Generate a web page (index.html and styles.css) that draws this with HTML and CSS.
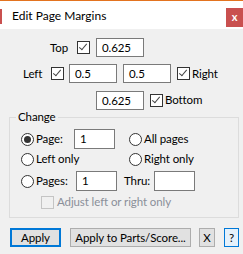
FILE: index.html
```html
<!DOCTYPE html>
<html lang="en">
<head>
  <meta charset="UTF-8">
  <title>Edit Page Margins</title>
  <link rel="stylesheet" href="styles.css">
</head>
<body>
  <div class="window">
    <!-- Title Bar -->
    <div class="titlebar">
      <span class="edge"></span>
      <span class="title">Edit Page Margins</span>
      <span class="close">x</span>
    </div>

    <!-- Margins -->
    <div class="margins">
      <div class="row row-top">
        <span class="lbl lbl-top">Top</span>
        <span class="check on"></span>
        <span class="field w48">0.625</span>
      </div>
      <div class="row row-left">
        <span class="lbl lbl-left">Left</span>
        <span class="check on"></span>
        <span class="field w48 first">0.5</span>
        <span class="field w48">0.5</span>
        <span class="check on right"></span>
        <span class="lbl tight">Right</span>
      </div>
      <div class="row row-bottom">
        <span class="field w48">0.625</span>
        <span class="check on"></span>
        <span class="lbl tight">Bottom</span>
      </div>
    </div>

    <!-- Change Group -->
    <fieldset class="group">
      <legend>Change</legend>
      <div class="grow">
        <div class="col1">
          <span class="radio on"></span>
          <span class="opt opt-page">Page:</span>
          <span class="field w41">1</span>
        </div>
        <span class="radio"></span>
        <span class="opt">All pages</span>
      </div>
      <div class="grow">
        <div class="col1">
          <span class="radio"></span>
          <span class="opt">Left only</span>
        </div>
        <span class="radio"></span>
        <span class="opt">Right only</span>
      </div>
      <div class="grow grow-pages">
        <span class="radio"></span>
        <span class="opt opt-pages">Pages:</span>
        <span class="field w41">1</span>
        <span class="opt opt-thru">Thru:</span>
        <span class="field w41"></span>
      </div>
      <div class="grow grow-adjust">
        <span class="check disabled"></span>
        <span class="opt muted">Adjust left or right only</span>
      </div>
    </fieldset>

    <!-- Buttons -->
    <div class="buttons">
      <button class="btn btn-apply">Apply</button>
      <button class="btn btn-parts">Apply to Parts/Score...</button>
      <button class="btn btn-x">X</button>
      <button class="btn btn-help">?</button>
    </div>
  </div>
</body>
</html>
```

FILE: styles.css
```css
body {
  margin: 0;
  background: #f0f0f0;
  font-family: 'Lato', sans-serif;
  font-size: 11.5px;
  letter-spacing: -0.1px;
  color: #000;
}

.window {
  width: 243px;
  height: 254px;
  overflow: hidden;
}

/* Title bar */
.titlebar {
  display: flex;
  align-items: flex-start;
  height: 28px;
  background: #fff;
  border-top: 1px solid #e3731f;
}

.edge {
  width: 2px;
  height: 15px;
  margin-top: 8px;
  background: #c9504f;
}

.title {
  margin-left: 10px;
  margin-top: 7px;
  font-size: 12px;
  letter-spacing: 0;
  line-height: 16px;
}

.close {
  margin-left: auto;
  margin-top: 7px;
  width: 17px;
  height: 19px;
  background: #c9504f;
  color: #fff;
  font-weight: 700;
  font-size: 11px;
  line-height: 18px;
  text-align: center;
}

/* Margin rows */
.margins {
  padding-top: 9px;
}

.row {
  display: flex;
  align-items: center;
  height: 19px;
  margin-bottom: 7px;
}

.row-top { padding-left: 50px; }
.lbl-top { width: 27px; }
.row-top .field { margin-left: 6px; }

.row-left { padding-left: 23px; }
.lbl-left { width: 28px; }
.row-left .field { margin-left: 6px; }
.row-left .field.first { margin-left: 5px; }
.row-left .check.right { margin-left: 6px; }

.row-bottom { padding-left: 96px; height: 20px; margin-bottom: 0; }
.row-bottom .check { margin-left: 6px; }

.lbl { line-height: 16px; white-space: nowrap; }
.lbl.tight { margin-left: 2px; }

.check {
  box-sizing: border-box;
  flex-shrink: 0;
  width: 13px;
  height: 13px;
  border: 1px solid #333;
  background: #fff;
  position: relative;
}

.check.on::after {
  content: "";
  position: absolute;
  left: 3px;
  top: 0;
  width: 3px;
  height: 7px;
  border: solid #444;
  border-width: 0 1px 1px 0;
  transform: rotate(40deg);
}

.check.disabled {
  border-color: #c4c4c4;
  background: #f0f0f0;
}

.field {
  box-sizing: border-box;
  flex-shrink: 0;
  height: 19px;
  border: 1px solid #7a7a7a;
  background: #fff;
  padding-left: 5px;
  line-height: 17px;
}

.w48 { width: 48px; }
.w41 { width: 41px; height: 20px; line-height: 18px; }

/* Change group */
.group {
  margin: -1px 4px 0 9px;
  padding: 0 0 4px 11px;
  border: 1px solid #dcdcdc;
  min-width: 0;
  height: 109px;
  box-sizing: border-box;
}

.group legend {
  padding: 0 2px;
  margin-left: -5px;
  line-height: 16px;
}

.grow {
  display: flex;
  align-items: center;
  height: 20px;
  white-space: nowrap;
}

.grow:first-of-type { margin-top: 4px; }

.col1 {
  display: flex;
  align-items: center;
  width: 108px;
}

.radio {
  box-sizing: border-box;
  flex-shrink: 0;
  width: 13px;
  height: 13px;
  border: 1px solid #333;
  border-radius: 50%;
  background: #fff;
  display: flex;
  align-items: center;
  justify-content: center;
}

.radio.on::after {
  content: "";
  width: 7px;
  height: 7px;
  border-radius: 50%;
  background: #333;
}

.opt { margin-left: 2px; line-height: 16px; }
.opt-page { width: 38px; }
.opt-pages { width: 40px; }
.opt-thru { margin-left: 7px; width: 30px; }

.grow-pages { margin-top: 2px; }
.grow-adjust { padding-left: 20px; margin-top: 1px; }
.grow-adjust .opt { margin-left: 3px; }

.muted { color: #8a8f99; }

/* Buttons */
.buttons {
  display: flex;
  padding: 10px 0 0 10px;
}

.btn {
  box-sizing: border-box;
  flex-shrink: 0;
  height: 19px;
  padding: 0;
  font-family: inherit;
  font-size: 11.5px;
  letter-spacing: -0.1px;
  color: #000;
  background: #e1e1e1;
  border: 1px solid #adadad;
  margin-right: 9px;
  line-height: 16px;
  white-space: nowrap;
}

.btn-apply { width: 51px; border: 2px solid #0078d7; }
.btn-parts { width: 121px; margin-right: 8px; }
.btn-x { width: 16px; }
.btn-help { width: 15px; background: #e5f1fb; border-color: #0078d7; }
```
